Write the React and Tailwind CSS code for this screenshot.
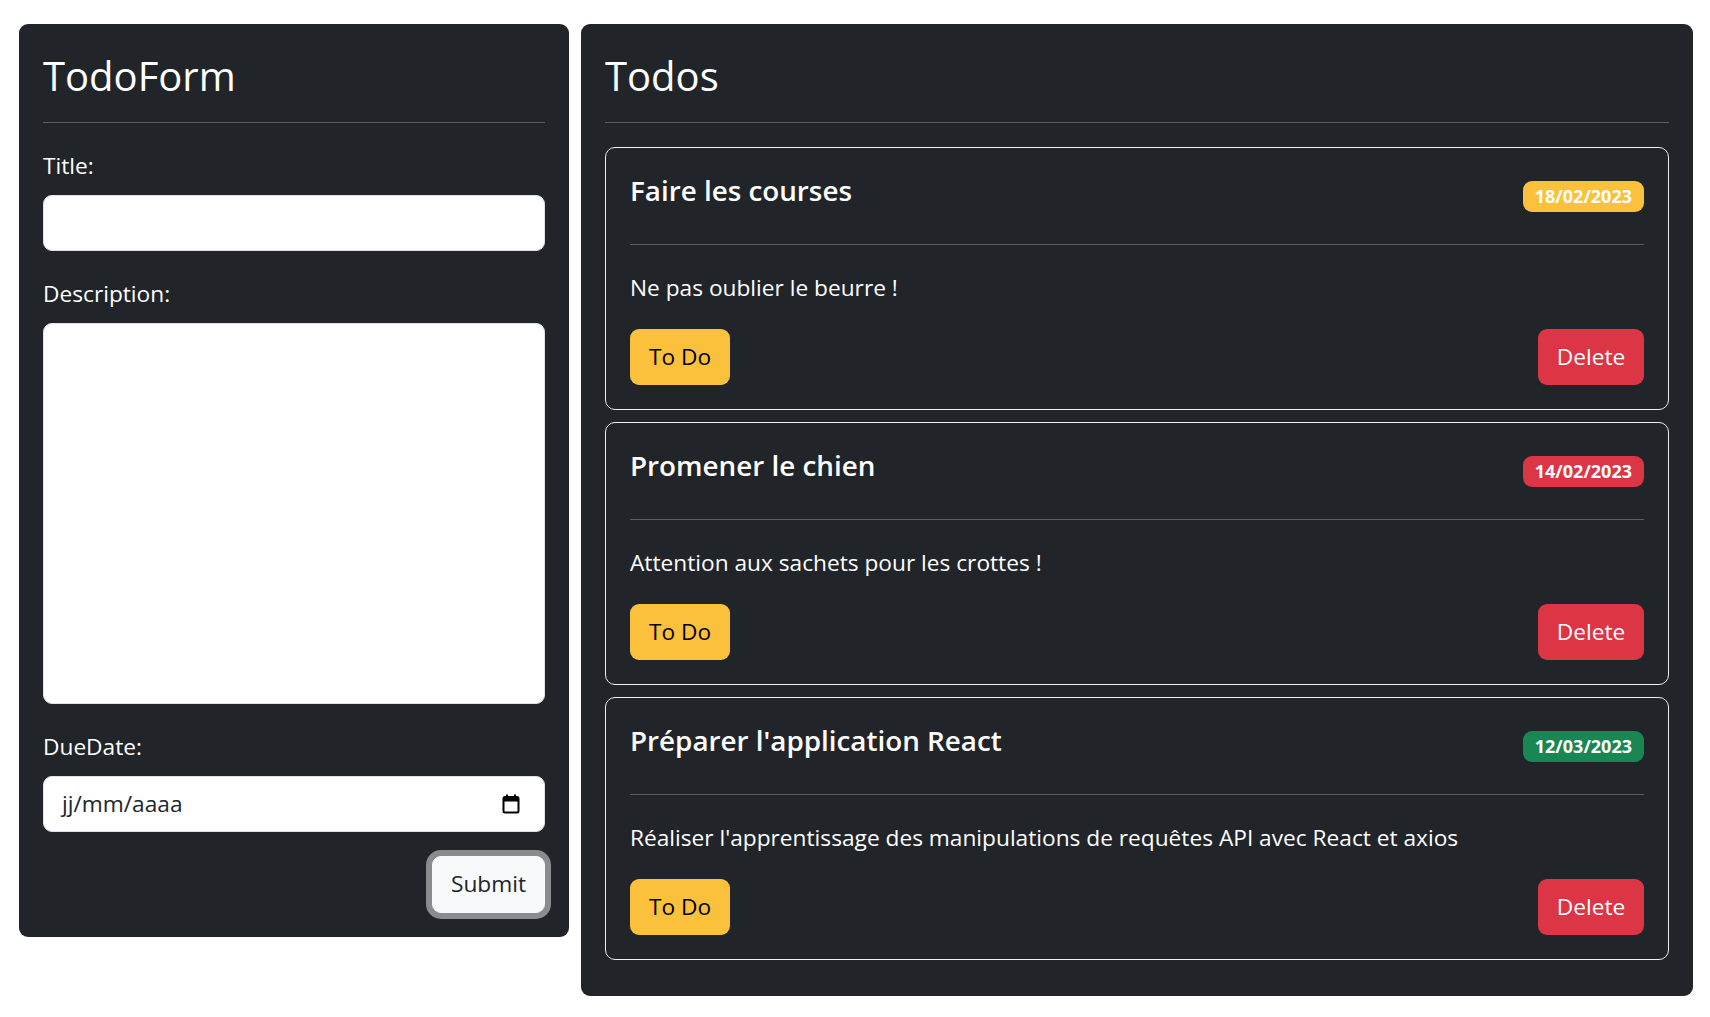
import { useState } from 'react';

const todos = [
  {
    id: 1,
    title: 'Faire les courses',
    description: 'Ne pas oublier le beurre !',
    dueDate: '18/02/2023',
    badge: 'bg-[#fcc13c]',
  },
  {
    id: 2,
    title: 'Promener le chien',
    description: 'Attention aux sachets pour les crottes !',
    dueDate: '14/02/2023',
    badge: 'bg-[#dc3545]',
  },
  {
    id: 3,
    title: "Préparer l'application React",
    description: "Réaliser l'apprentissage des manipulations de requêtes API avec React et axios",
    dueDate: '12/03/2023',
    badge: 'bg-[#198754]',
  },
];

function CalendarIcon() {
  return (
    <svg width="18" height="20" viewBox="0 0 18 20" fill="none">
      <path d="M5 0.5v3M13 0.5v3" stroke="#000" strokeWidth="2" />
      <rect x="1.5" y="3" width="15" height="15.5" rx="1.5" stroke="#000" strokeWidth="2" />
      <rect x="1.5" y="3" width="15" height="4.5" fill="#000" />
    </svg>
  );
}

function TodoForm() {
  const [title, setTitle] = useState('');
  const [description, setDescription] = useState('');

  return (
    <div className="w-[550px] shrink-0 self-start bg-[#212529] rounded-[9px] p-[24px] text-white">
      <h3 className="text-[40px] font-medium leading-[55px] h-[50px]">TodoForm</h3>
      <hr className="my-[24px] border-t border-[#5a5d61]" />
      <form onSubmit={(e) => e.preventDefault()}>
        <div className="mb-[24px]">
          <label className="block mb-[10px] text-[22.7px] leading-[38px]">Title:</label>
          <input
            value={title}
            onChange={(e) => setTitle(e.target.value)}
            className="block w-full h-[56px] bg-white text-[#212529] border-[1.5px] border-[#dee2e6] rounded-[9px] px-[18px] text-[22.7px] outline-none"
          />
        </div>
        <div className="mb-[24px]">
          <label className="block mb-[10px] text-[22.7px] leading-[38px]">Description:</label>
          <textarea
            value={description}
            onChange={(e) => setDescription(e.target.value)}
            className="block w-full h-[381px] bg-white text-[#212529] border-[1.5px] border-[#dee2e6] rounded-[9px] px-[18px] py-[9px] text-[22.7px] outline-none resize-none"
          />
        </div>
        <div className="mb-[24px]">
          <label className="block mb-[10px] text-[22.7px] leading-[38px]">DueDate:</label>
          <div className="flex items-center justify-between h-[56px] bg-white text-[#212529] border-[1.5px] border-[#dee2e6] rounded-[9px] pl-[18px] pr-[24px] text-[22.7px]">
            <span>jj/mm/aaaa</span>
            <CalendarIcon />
          </div>
        </div>
        <div className="flex justify-end">
          <button
            type="submit"
            className="h-[57px] w-[113px] bg-[#f8f9fa] text-[#212529] border-[1.5px] border-[#f8f9fa] rounded-[9px] text-[22.7px] shadow-[0_0_0_6px_#898c8f]"
          >
            Submit
          </button>
        </div>
      </form>
    </div>
  );
}

function TodoCard({ todo }) {
  return (
    <div className="mb-[12px] border-[1.5px] border-[#eceef0] rounded-[10px] p-[24px]">
      <div className="flex items-center justify-between">
        <h5 className="mb-[12px] text-[27.8px] leading-[36px] font-semibold">{todo.title}</h5>
        <span className={todo.badge + ' h-[31px] px-[12px] rounded-[9px] flex items-center text-[18px] font-bold text-white'}>
          {todo.dueDate}
        </span>
      </div>
      <hr className="my-[24px] border-t border-[#5a5d61]" />
      <p className="mb-[22px] text-[22.7px] leading-[38px]">{todo.description}</p>
      <div className="flex items-center justify-between">
        <button className="h-[56px] w-[100px] bg-[#fcc13c] text-[#000] rounded-[9px] text-[22.7px]">To Do</button>
        <button className="h-[56px] w-[106px] bg-[#dc3545] text-white rounded-[9px] text-[22.7px]">Delete</button>
      </div>
    </div>
  );
}

export default function App() {
  return (
    <div className="min-h-screen bg-white font-['Open_Sans'] pl-[19px] pr-[17px] pt-[24px]">
      <div className="flex gap-[12px]">
        <TodoForm />
        <div className="flex-1 bg-[#212529] rounded-[9px] px-[24px] pt-[24px] pb-[24px] text-white">
          <h3 className="text-[40px] font-medium leading-[55px] h-[50px]">Todos</h3>
          <hr className="my-[24px] border-t border-[#5a5d61]" />
          {todos.map((todo) => (
            <TodoCard key={todo.id} todo={todo} />
          ))}
        </div>
      </div>
    </div>
  );
}
